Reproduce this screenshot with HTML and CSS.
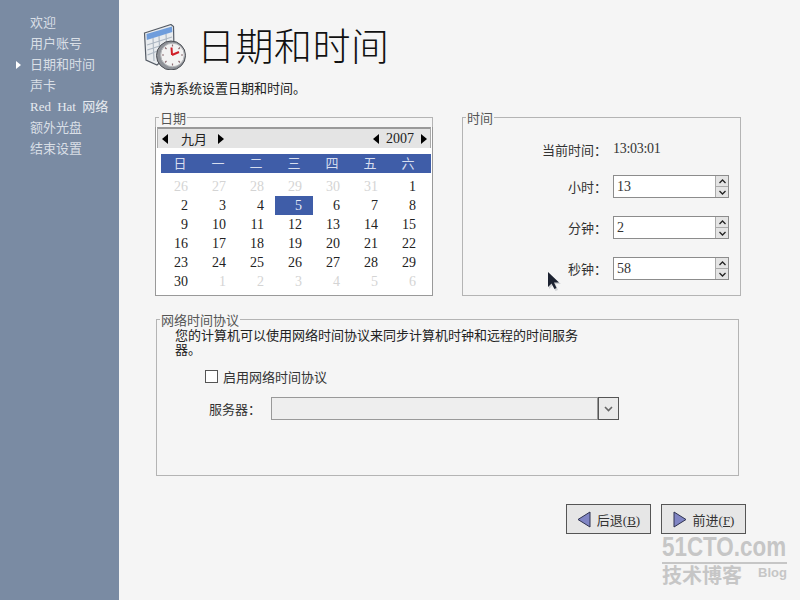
FILE: index.html
```html
<!DOCTYPE html>
<html lang="zh-CN">
<head>
  <meta charset="UTF-8">
  <title>日期和时间</title>
  <link rel="stylesheet" href="styles.css">
</head>
<body>
  <aside class="sidebar">
    <ul class="steps">
      <li>欢迎</li>
      <li>用户账号</li>
      <li class="current">日期和时间</li>
      <li>声卡</li>
      <li class="wide">Red Hat 网络</li>
      <li>额外光盘</li>
      <li>结束设置</li>
    </ul>
  </aside>

  <main class="main">
    <header class="header">
      <svg class="header-icon" width="44" height="46" viewBox="0 0 44 46">
        <path d="M1.500 9 L28 0.500 L30.500 2.500 L31 26 L14 41 L3 36 Z" fill="#e9ecef" stroke="#555c66" stroke-width="1.200"/>
        <path d="M3.500 10 L29 2.500 L29.300 8 L3.800 16 Z" fill="#6f9ddc"/>
        <path d="M4 21 L29 13 M4.300 26 L29 18 M4.500 31 L22 24 M10 14 L11 37 M16 12 L17 34 M23 10 L24 27" stroke="#aeb8c3" stroke-width="1.200" fill="none"/>
        <circle cx="28" cy="31.500" r="14.500" fill="#8f9298" stroke="#4c4f55"/>
        <circle cx="29.500" cy="31" r="11.800" fill="#f3f3f3" stroke="#b5b7ba"/>
        <path d="M29 31 L28.500 23.500 M29 31 L36 28" stroke="#d01f28" stroke-width="2" fill="none"/>
        <path d="M29.500 20.500 V22.500 M29.500 39.500 V41.500 M19 31 H21 M38 31 H40 M22 23.500 L23.500 25 M35.500 37 L37 38.500 M22 38.500 L23.500 37 M35.500 25 L37 23.500" stroke="#8a6a70" stroke-width="1.200"/>
      </svg>
      <h1 class="title">日期和时间</h1>
    </header>
    <p class="intro">请为系统设置日期和时间。</p>

    <div class="top-groups">
      <fieldset class="group">
        <legend>日期</legend>
        <div class="calendar">
          <div class="cal-nav">
            <div class="cal-nav-part">
              <span class="arrow-left"></span>
              <span class="cal-month">九月</span>
              <span class="arrow-right"></span>
            </div>
            <div class="cal-nav-part">
              <span class="arrow-left"></span>
              <span class="cal-year">2007</span>
              <span class="arrow-right"></span>
            </div>
          </div>
          <div class="cal-weekdays">
            <span>日</span><span>一</span><span>二</span><span>三</span><span>四</span><span>五</span><span>六</span>
          </div>
          <div class="cal-days">
            <span class="other">26</span><span class="other">27</span><span class="other">28</span><span class="other">29</span><span class="other">30</span><span class="other">31</span><span>1</span>
            <span>2</span><span>3</span><span>4</span><span class="selected">5</span><span>6</span><span>7</span><span>8</span>
            <span>9</span><span>10</span><span>11</span><span>12</span><span>13</span><span>14</span><span>15</span>
            <span>16</span><span>17</span><span>18</span><span>19</span><span>20</span><span>21</span><span>22</span>
            <span>23</span><span>24</span><span>25</span><span>26</span><span>27</span><span>28</span><span>29</span>
            <span>30</span><span class="other">1</span><span class="other">2</span><span class="other">3</span><span class="other">4</span><span class="other">5</span><span class="other">6</span>
          </div>
        </div>
      </fieldset>

      <fieldset class="group group-time">
        <legend>时间</legend>
        <div class="time-grid">
          <span class="time-label">当前时间：</span>
          <span class="time-now">13:03:01</span>
          <span class="time-label">小时：</span>
          <div class="spin"><span class="spin-value">13</span><div class="spin-btns"><span class="spin-btn"><svg width="7" height="5" viewBox="0 0 7 5"><path d="M0.500 4 L3.500 1 L6.500 4" fill="none" stroke="#222" stroke-width="1.300"/></svg></span><span class="spin-btn"><svg width="7" height="5" viewBox="0 0 7 5"><path d="M0.500 1 L3.500 4 L6.500 1" fill="none" stroke="#222" stroke-width="1.300"/></svg></span></div></div>
          <span class="time-label">分钟：</span>
          <div class="spin"><span class="spin-value">2</span><div class="spin-btns"><span class="spin-btn"><svg width="7" height="5" viewBox="0 0 7 5"><path d="M0.500 4 L3.500 1 L6.500 4" fill="none" stroke="#222" stroke-width="1.300"/></svg></span><span class="spin-btn"><svg width="7" height="5" viewBox="0 0 7 5"><path d="M0.500 1 L3.500 4 L6.500 1" fill="none" stroke="#222" stroke-width="1.300"/></svg></span></div></div>
          <span class="time-label">秒钟：</span>
          <div class="spin"><span class="spin-value">58</span><div class="spin-btns"><span class="spin-btn"><svg width="7" height="5" viewBox="0 0 7 5"><path d="M0.500 4 L3.500 1 L6.500 4" fill="none" stroke="#222" stroke-width="1.300"/></svg></span><span class="spin-btn"><svg width="7" height="5" viewBox="0 0 7 5"><path d="M0.500 1 L3.500 4 L6.500 1" fill="none" stroke="#222" stroke-width="1.300"/></svg></span></div></div>
        </div>
      </fieldset>
    </div>

    <fieldset class="group ntp">
      <legend>网络时间协议</legend>
      <p class="ntp-text">您的计算机可以使用网络时间协议来同步计算机时钟和远程的时间服务器。</p>
      <label class="ntp-check"><span class="checkbox"></span>启用网络时间协议</label>
      <div class="ntp-server">
        <span class="server-label">服务器：</span>
        <div class="combo-field"></div>
        <div class="combo-btn"><svg width="9" height="6" viewBox="0 0 9 6"><path d="M1 1 L4.500 4.500 L8 1" fill="none" stroke="#666" stroke-width="1.600"/></svg></div>
      </div>
    </fieldset>

    <div class="actions">
      <button class="btn"><svg width="14" height="17" viewBox="0 0 14 17"><path d="M13 1 V16 L1 8.500 Z" fill="#8085c4" stroke="#2f3350"/></svg><span>后退(<u>B</u>)</span></button>
      <button class="btn"><svg width="14" height="17" viewBox="0 0 14 17"><path d="M1 1 V16 L13 8.500 Z" fill="#8085c4" stroke="#2f3350"/></svg><span>前进(<u>F</u>)</span></button>
    </div>
  </main>

  <svg class="pointer" width="14" height="20" viewBox="0 0 14 20">
    <path d="M2 3 L2 18 L5.500 14.500 L8.500 20 L11 19 L8.500 13 L14 13 Z" fill="#b9bcc0" opacity="0.600"/>
    <path d="M1 1 L1 16 L4.500 12.500 L7.500 18 L9.500 17 L7 11.500 L12 11.500 Z" fill="#1c2230"/>
  </svg>

  <div class="watermark">
    <div class="wm-logo"><span class="wm-logo-text">51CTO.com</span></div>
    <div class="wm-bottom"><span class="wm-cn">技术博客</span><span class="wm-blog">Blog</span></div>
  </div>
</body>
</html>
```

FILE: styles.css
```css
* {
  box-sizing: border-box;
}
html, body {
  height: 100%;
}
body {
  margin: 0;
  width: 800px;
  height: 600px;
  overflow: hidden;
  display: flex;
  position: relative;
  background-color: #f5f5f5;
  color: #222;
  font-family: "Liberation Serif", "Noto Sans CJK SC", serif;
  font-size: 13px;
}

/* sidebar */
.sidebar {
  width: 119px;
  flex: none;
  background-color: #7a8ba3;
  padding-top: 12px;
}
.steps {
  list-style: none;
  margin: 0;
  padding: 0 0 0 30px;
  color: #d9dfe6;
}
.steps li {
  height: 21px;
  line-height: 21px;
  position: relative;
  white-space: nowrap;
}
.steps .wide {
  word-spacing: 3px;
  color: #e6eaef;
}
.steps .current::before {
  content: "";
  position: absolute;
  left: -14px;
  top: 7px;
  border-left: 5px solid #fff;
  border-top: 4px solid transparent;
  border-bottom: 4px solid transparent;
}

/* main column */
.main {
  flex: 1;
  padding: 24px 0 0 24px;
}
.header {
  display: flex;
  align-items: center;
  gap: 10px;
  height: 46px;
}
.header-icon {
  flex: none;
}
.title {
  margin: 0;
  font-size: 38px;
  font-weight: 300;
  letter-spacing: 0.5px;
  line-height: 46px;
  color: #111;
}
.intro {
  margin: 12px 0 0 7px;
  line-height: 14px;
  height: 14px;
}

/* group boxes */
.top-groups {
  display: flex;
  gap: 29px;
  margin: 15px 0 0 12px;
}
.group {
  width: 278px;
  height: 185px;
  margin: 0;
  padding: 0;
  border: 1px solid #b4b4b4;
  min-width: 0;
}
.group-time {
  width: 279px;
}
.group legend {
  margin-left: 3px;
  padding: 0 1px;
  height: 12px;
  line-height: 16px;
  color: #555;
}

/* calendar */
.calendar {
  margin: 4px -1px 0;
  padding: 0 1px;
  height: 169px;
  background-color: #fff;
  border-bottom: 1px solid #999;
  border-left: 1px solid #999;
  border-right: 1px solid #999;
}
.cal-nav {
  height: 21px;
  display: flex;
  justify-content: space-between;
  align-items: center;
  background-color: #e4e4e4;
  border-top: 2px solid #999;
  border-left: 1px solid #aaa;
  border-right: 1px solid #aaa;
  padding: 0 3px 0 4px;
}
.cal-nav-part {
  display: flex;
  align-items: center;
}
.cal-month {
  margin: 0 11px 0 13px;
}
.cal-year {
  margin: 0 7px;
  font-size: 14px;
}
.arrow-left {
  border-right: 6px solid #000;
  border-top: 5px solid transparent;
  border-bottom: 5px solid transparent;
}
.arrow-right {
  border-left: 6px solid #000;
  border-top: 5px solid transparent;
  border-bottom: 5px solid transparent;
}
.cal-weekdays {
  display: grid;
  grid-template-columns: repeat(7, 38px);
  margin: 6px 0 0 4px;
  height: 19px;
  line-height: 19px;
  background-color: #3f5da8;
  color: #d7deef;
  text-align: center;
}
.cal-days {
  display: grid;
  grid-template-columns: repeat(7, 38px);
  grid-auto-rows: 19px;
  margin: 4px 0 0 4px;
  font-size: 14px;
  line-height: 19px;
  text-align: right;
}
.cal-days span {
  padding-right: 11px;
}
.cal-days .other {
  color: #d4d4d4;
}
.cal-days .selected {
  background-color: #3f5da8;
  color: #e6ebf7;
}

/* time */
.time-grid {
  display: grid;
  grid-template-columns: 144px 116px;
  grid-template-rows: 16px 23px 23px 23px;
  column-gap: 6px;
  row-gap: 18px;
  align-items: center;
  margin-top: 18px;
  color: #333;
}
.time-label {
  text-align: right;
  white-space: nowrap;
}
.time-now {
  font-size: 14px;
  letter-spacing: -0.3px;
}
.spin {
  display: flex;
  width: 116px;
  height: 23px;
  background-color: #fff;
  border: 1px solid #8c8c8c;
}
.spin-value {
  flex: 1;
  padding-left: 3px;
  line-height: 21px;
  font-size: 14px;
}
.spin-btns {
  width: 13px;
  display: flex;
  flex-direction: column;
  border-left: 1px solid #aaa;
}
.spin-btn {
  flex: 1;
  display: flex;
  align-items: center;
  justify-content: center;
  background-color: #e4e4e4;
  border-bottom: 1px solid #aaa;
}
.spin-btn:last-child {
  border-bottom: none;
}

/* network time */
.ntp {
  width: 583px;
  height: 163px;
  margin: 17px 0 0 13px;
}
.ntp-text {
  margin: 4px 0 0 18px;
  width: 410px;
  line-height: 14px;
}
.ntp-check {
  display: flex;
  align-items: center;
  gap: 5px;
  margin: 12px 0 0 48px;
  height: 14px;
  color: #333;
}
.checkbox {
  width: 13px;
  height: 13px;
  background-color: #fff;
  border: 1px solid #555;
}
.ntp-server {
  display: flex;
  align-items: center;
  margin: 14px 0 0 52px;
  height: 23px;
}
.server-label {
  width: 62px;
  color: #333;
}
.combo-field {
  width: 327px;
  height: 23px;
  background-color: #eee;
  border: 1px solid #999;
}
.combo-btn {
  width: 21px;
  height: 23px;
  display: flex;
  align-items: center;
  justify-content: center;
  background-color: #eaeaea;
  border: 1px solid #555;
}

/* back / next */
.actions {
  display: flex;
  justify-content: flex-end;
  gap: 10px;
  width: 603px;
  margin-top: 28px;
}
.btn {
  width: 85px;
  height: 30px;
  display: flex;
  align-items: center;
  justify-content: center;
  gap: 6px;
  padding: 0;
  background-color: #e6e6e6;
  border: 1px solid #555;
  color: #333;
  font-family: inherit;
  font-size: 13px;
}

/* things lying over the page */
.pointer {
  position: absolute;
  left: 547px;
  top: 271px;
}
.watermark {
  position: absolute;
  left: 662px;
  top: 530px;
  width: 125px;
  color: #c6c6c6;
  font-family: "Liberation Sans", "Noto Sans CJK SC", sans-serif;
  font-weight: bold;
}
.wm-logo {
  height: 34px;
  line-height: 34px;
  font-size: 28px;
  white-space: nowrap;
  border-bottom: 2px solid #c6c6c6;
}
.wm-logo-text {
  display: inline-block;
  transform: scaleX(0.8);
  transform-origin: left center;
}
.wm-bottom {
  display: flex;
  justify-content: space-between;
  align-items: flex-start;
}
.wm-cn {
  font-size: 20px;
  line-height: 24px;
}
.wm-blog {
  font-size: 13px;
  line-height: 16px;
  margin-top: 1px;
}
```
